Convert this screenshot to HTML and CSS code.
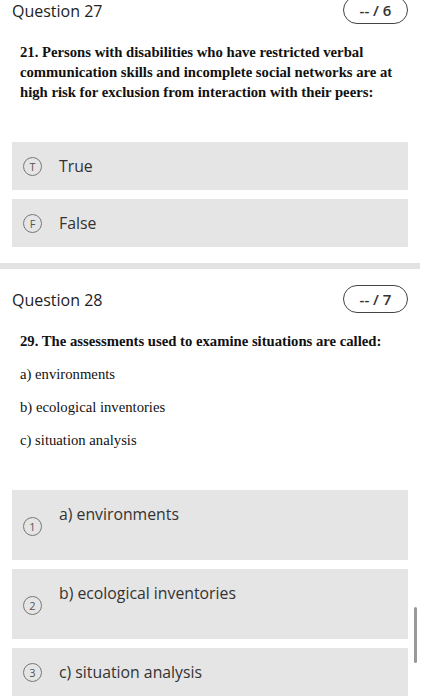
FILE: index.html
```html
<!DOCTYPE html>
<html>
<head>
<meta charset="utf-8">
<link rel="stylesheet" href="styles.css">
</head>
<body>
<section class="question first">
  <div class="q-head">
    <span class="q-title">Question 27</span>
    <span class="badge">-- / 6</span>
  </div>
  <div class="q-text">
    <p class="bold">21. Persons with disabilities who have restricted verbal communication skills and incomplete social networks are at high risk for exclusion from interaction with their peers:</p>
  </div>
  <div class="options">
    <div class="option short"><span class="mark">T</span><span class="opt-text">True</span></div>
    <div class="option short"><span class="mark">F</span><span class="opt-text">False</span></div>
  </div>
</section>
<div class="divider"></div>
<section class="question">
  <div class="q-head">
    <span class="q-title">Question 28</span>
    <span class="badge">-- / 7</span>
  </div>
  <div class="q-text">
    <p class="bold">29. The assessments used to examine situations are called:</p>
    <p>a) environments</p>
    <p>b) ecological inventories</p>
    <p>c) situation analysis</p>
  </div>
  <div class="options">
    <div class="option tall"><span class="mark">1</span><span class="opt-text">a) environments</span></div>
    <div class="option tall"><span class="mark">2</span><span class="opt-text">b) ecological inventories</span></div>
    <div class="option short"><span class="mark">3</span><span class="opt-text">c) situation analysis</span></div>
  </div>
</section>
<div class="scrollbar"></div>
</body>
</html>
```
FILE: styles.css
```css
html, body {
  margin: 0;
  padding: 0;
  background: #fff;
}
body {
  font-family: "Open Sans", "Liberation Sans", sans-serif;
  color: #222;
  overflow: hidden;
}
.question {
  padding: 0 13px 0 12px;
}
.question.first {
  margin-top: -4px;
}
.q-head {
  display: flex;
  justify-content: space-between;
  align-items: center;
  height: 28px;
}
.q-title {
  font-size: 16px;
  color: #222;
  line-height: 20px;
  padding-top: 1px;
}
.badge {
  box-sizing: border-box;
  width: 65px;
  height: 28px;
  border: 1px solid #444;
  border-radius: 14px;
  display: flex;
  align-items: center;
  justify-content: center;
  font-size: 15px;
  font-weight: 600;
  color: #333;
}
.q-text {
  padding-left: 8px;
  margin-top: 18px;
  font-family: "Liberation Serif", "Times New Roman", serif;
  color: #111;
}
.q-text p {
  margin: 13px 0 0;
  font-size: 14.7px;
  line-height: 20px;
}
.q-text p:first-child {
  margin-top: 0;
}
.q-text p.bold {
  font-weight: bold;
  font-size: 14.7px;
}
.options {
  display: flex;
  flex-direction: column;
  gap: 9px;
  margin-top: 40px;
}
.option {
  background: #e5e5e5;
  display: flex;
  padding-left: 11px;
  box-sizing: border-box;
}
.option.short {
  height: 48px;
  align-items: center;
}
.option.tall {
  height: 70px;
  align-items: flex-start;
  padding-top: 13px;
}
.option.tall .mark {
  margin-top: 14px;
}
.mark {
  box-sizing: border-box;
  width: 19px;
  height: 19px;
  flex: none;
  border: 1px solid #777;
  border-radius: 50%;
  display: flex;
  align-items: center;
  justify-content: center;
  font-size: 11px;
  line-height: 1;
  color: #555;
}
.opt-text {
  margin-left: 17px;
  font-size: 15.8px;
  line-height: 22px;
  color: #333;
}
.divider {
  height: 6px;
  background: #e3e3e3;
  margin: 16px 1px 16px 0;
}
.scrollbar {
  position: fixed;
  left: 414px;
  top: 607px;
  width: 3px;
  height: 56px;
  background: #999;
  border-radius: 2px;
}
```
